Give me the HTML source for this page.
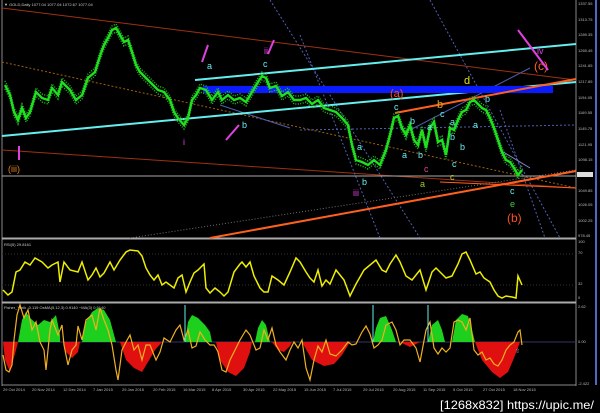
<!DOCTYPE html>
<html><head><meta charset="utf-8"><style>
html,body{margin:0;padding:0;background:#000;width:600px;height:413px;overflow:hidden}
svg{display:block}
text{font-family:"Liberation Sans",sans-serif}
</style></head><body>
<svg width="600" height="413" viewBox="0 0 600 413" xmlns="http://www.w3.org/2000/svg">
<defs>
<polyline id="pr" fill="none" points="5,85 10,95 14,112 18,120 22,108 26,118 30,112 36,92 42,98 48,100 52,88 58,95 62,82 70,90 76,100 82,95 88,78 95,72 100,56 104,45 108,38 112,30 116,28 120,35 124,42 128,40 132,52 136,65 140,72 146,78 152,84 158,90 164,92 170,100 174,112 178,118 184,125 188,118 192,100 196,95 200,88 206,90 212,100 218,92 222,100 228,95 234,100 240,98 246,102 252,92 258,82 262,76 266,78 270,88 276,86 282,96 288,92 294,100 300,100 306,98 312,104 318,100 324,108 330,110 336,112 342,118 348,125 352,145 356,160 362,162 368,165 374,160 380,165 386,150 390,135 394,118 398,116 402,128 406,135 410,125 414,140 418,145 422,130 426,148 430,128 434,122 438,142 442,140 446,155 450,128 454,130 458,120 462,112 466,110 470,102 474,100 478,104 482,108 486,110 490,118 494,128 498,140 502,152 506,160 510,162 514,168 518,175 522,170"/>
</defs>
<rect width="600" height="413" fill="#000"/>
<line x1="2" y1="0" x2="2" y2="386" stroke="#888" stroke-width="1"/>
<line x1="576" y1="0" x2="576" y2="386" stroke="#888" stroke-width="1"/>
<line x1="2" y1="238.5" x2="576" y2="238.5" stroke="#aaa" stroke-width="2"/>
<line x1="2" y1="302.5" x2="576" y2="302.5" stroke="#aaa" stroke-width="2"/>
<line x1="2" y1="385" x2="576" y2="385" stroke="#888"/>
<line x1="596" y1="0" x2="596" y2="385" stroke="#6a8cff" stroke-width="1.5"/>
<text x="4" y="6" font-size="4" fill="#ccc">▼ GOLD,Daily 1077.04 1077.04 1072.67 1077.04</text>
<g fill="none" stroke-width="1">
<line x1="2" y1="8" x2="576" y2="80" stroke="#a03010"/>
<line x1="2" y1="150" x2="576" y2="188" stroke="#a03010"/>
<line x1="2" y1="62" x2="576" y2="188" stroke="#a06010" stroke-dasharray="2,2"/>
<line x1="300" y1="130" x2="576" y2="125" stroke="#5060b0" stroke-dasharray="2,2"/>
<line x1="130" y1="238" x2="576" y2="170" stroke="#707070" stroke-dasharray="1,2"/>
<line x1="270" y1="0" x2="420" y2="238" stroke="#5060b0" stroke-dasharray="2,2"/>
<line x1="430" y1="0" x2="560" y2="238" stroke="#5060b0" stroke-dasharray="2,2"/>
<line x1="300" y1="35" x2="380" y2="238" stroke="#5060b0" stroke-dasharray="2,2"/>
<line x1="500" y1="110" x2="545" y2="238" stroke="#5060b0" stroke-dasharray="2,2"/>
<line x1="220" y1="105" x2="290" y2="128" stroke="#5060b0"/>
<line x1="410" y1="130" x2="530" y2="68" stroke="#5060b0"/>
<line x1="500" y1="150" x2="530" y2="168" stroke="#8888cc"/>
<line x1="2" y1="176" x2="576" y2="176" stroke="#aaa"/>
</g>
<line x1="2" y1="136" x2="576" y2="82" stroke="#6ee" stroke-width="2"/>
<line x1="195" y1="80" x2="576" y2="44" stroke="#6ee" stroke-width="2"/>
<rect x="203" y="86" width="350" height="7" fill="#0a1cff"/>
<line x1="395" y1="113" x2="576" y2="79" stroke="#ff6020" stroke-width="2"/>
<line x1="210" y1="238" x2="576" y2="171" stroke="#ff6020" stroke-width="2"/>
<line x1="440" y1="182" x2="576" y2="188" stroke="#ff6020" stroke-width="1"/>
<use href="#pr" stroke="#1ec01e" stroke-width="1.5" stroke-dasharray="1,1.5" transform="translate(0,-4)"/>
<use href="#pr" stroke="#1ec01e" stroke-width="1.5" stroke-dasharray="1,1.5" transform="translate(0,4)"/>
<use href="#pr" stroke="#1ee01e" stroke-width="2.4"/>
<g font-size="9">
<text x="207" y="69" fill="#6ee">a</text>
<text x="263" y="67" fill="#6ee">c</text>
<text x="242" y="128" fill="#6ee">b</text>
<text x="183" y="145" fill="#e040e0">i</text>
<text x="264" y="54" fill="#e040e0">ii</text>
<text x="353" y="196" fill="#e040e0">iii</text>
<text x="8" y="172" fill="#e08020">(iii)</text>
<text x="390" y="97" fill="#ff5020" font-size="11">(a)</text>
<text x="394" y="110" fill="#6ee">c</text>
<text x="410" y="124" fill="#6ee">b</text>
<text x="427" y="130" fill="#6ee">a</text>
<text x="440" y="117" fill="#6ee">c</text>
<text x="450" y="125" fill="#6ee">a</text>
<text x="437" y="108" fill="#e0a020" font-size="11">b</text>
<text x="464" y="84" fill="#e0e020" font-size="11">d</text>
<text x="485" y="102" fill="#6ee">b</text>
<text x="473" y="128" fill="#6ee">a</text>
<text x="357" y="150" fill="#6ee">a</text>
<text x="362" y="185" fill="#6ee">b</text>
<text x="402" y="158" fill="#6ee">a</text>
<text x="418" y="158" fill="#6ee">b</text>
<text x="450" y="140" fill="#6ee">b</text>
<text x="460" y="150" fill="#6ee">b</text>
<text x="452" y="167" fill="#6ee">c</text>
<text x="424" y="172" fill="#e040a0">c</text>
<text x="420" y="187" fill="#9c3">a</text>
<text x="450" y="180" fill="#cc3">c</text>
<text x="510" y="194" fill="#6ee">c</text>
<text x="510" y="207" fill="#4c4">e</text>
<text x="507" y="222" fill="#ff5020" font-size="12">(b)</text>
<text x="534" y="70" fill="#ff6020" font-size="12">(c)</text>
<text x="537" y="54" fill="#e040e0">iv</text>
</g>
<g stroke="#e040e0" stroke-width="2" fill="none">
<line x1="208" y1="45" x2="202" y2="62"/>
<line x1="274" y1="40" x2="268" y2="54"/>
<line x1="239" y1="125" x2="226" y2="140"/>
<line x1="19" y1="160" x2="19" y2="146"/>
<line x1="518" y1="30" x2="548" y2="70"/>
</g>
<g font-size="4" fill="#bbb">
<text x="578" y="5">1337.55</text><text x="578" y="21">1313.75</text><text x="578" y="36">1289.35</text>
<text x="578" y="52">1265.45</text><text x="578" y="67">1241.65</text><text x="578" y="83">1217.85</text>
<text x="578" y="99">1194.05</text><text x="578" y="114">1169.55</text><text x="578" y="130">1145.75</text>
<text x="578" y="146">1121.95</text><text x="578" y="161">1098.15</text><text x="578" y="192">1049.85</text>
<text x="578" y="206">1026.05</text><text x="578" y="222">1002.25</text><text x="578" y="237">978.45</text>
<text x="578" y="243">100</text><text x="578" y="254">70</text><text x="578" y="285">32</text><text x="578" y="299">0</text>
<text x="578" y="308">2.62</text><text x="578" y="343">0.00</text><text x="578" y="385">-2.422</text>
</g>
<rect x="577" y="172" width="16" height="5" fill="#ddd"/>
<text x="4" y="246" font-size="4" fill="#ccc">RSI(5) 29.8161</text>
<line x1="2" y1="254" x2="576" y2="254" stroke="#333" stroke-dasharray="1,2"/>
<line x1="2" y1="285" x2="576" y2="285" stroke="#333" stroke-dasharray="1,2"/>
<polyline fill="none" stroke="#ee0" stroke-width="1.5" points="3,290 8,295 12,292 16,272 20,270 25,262 30,265 35,258 42,262 48,268 52,265 58,262 60,282 64,262 70,270 78,272 82,262 88,280 92,275 96,268 100,277 104,273 110,262 114,270 120,260 126,252 130,250 138,251 142,256 146,268 150,275 154,280 158,275 162,285 166,282 170,285 174,288 178,278 182,275 186,292 190,282 194,273 198,270 204,264 206,288 210,293 215,288 220,292 224,296 228,292 234,272 240,264 242,262 246,267 250,262 254,276 260,288 264,292 268,292 272,276 278,280 284,285 290,272 296,258 300,262 306,272 310,278 314,282 318,270 322,286 326,280 330,284 336,270 344,280 350,296 356,284 364,270 376,260 382,270 386,272 390,264 396,255 400,262 406,276 412,280 420,270 426,290 432,272 436,268 442,274 446,278 452,276 458,264 462,254 466,252 470,260 476,274 480,272 484,278 490,282 494,290 498,296 502,298 506,296 512,297 516,298 518,276 522,285"/>
<text x="4" y="309" font-size="4" fill="#ccc">Fisher_Yurik -0.119  OsMA(5,12,3) 0.9140  ~MA(3) 0.9140</text>
<line x1="2" y1="342" x2="576" y2="342" stroke="#336" stroke-width="1"/>
<g fill="#1ed01e">
<path d="M18,342 L22,320 L26,312 L30,318 L38,325 L44,320 L50,322 L56,315 L60,335 L60,342Z"/>
<path d="M82,342 L86,322 L92,312 L98,308 L104,310 L110,320 L116,342Z"/>
<path d="M185,342 L188,322 L192,315 L198,318 L205,325 L210,332 L212,342Z"/>
<path d="M255,342 L258,328 L262,320 L266,325 L270,342Z"/>
<path d="M373,342 L376,328 L380,318 L386,316 L392,330 L396,342Z"/>
<path d="M428,342 L432,325 L438,320 L442,330 L445,342Z"/>
<path d="M452,342 L456,320 L462,314 L468,316 L472,330 L475,342Z"/>
</g>
<g fill="#e01010">
<path d="M3,342 L5,360 L10,372 L16,350 L18,342Z"/>
<path d="M64,342 L66,352 L72,358 L78,352 L80,342Z"/>
<path d="M120,342 L126,360 L134,368 L142,372 L148,362 L155,350 L162,342Z"/>
<path d="M216,342 L220,360 L228,372 L236,376 L244,368 L250,352 L252,342Z"/>
<path d="M272,342 L278,350 L284,352 L290,346 L292,342Z"/>
<path d="M302,342 L312,360 L324,366 L334,364 L342,355 L350,342Z"/>
<path d="M400,342 L420,342 L410,347Z"/>
<path d="M475,342 L482,360 L492,372 L500,378 L508,372 L514,358 L520,342Z"/>
</g>
<polyline fill="none" stroke="#f0b020" stroke-width="1.2" points="3,355 6,370 9,372 12,365 14,340 17,315 20,305 24,318 28,310 32,330 36,322 40,342 44,350 46,370 50,330 52,320 58,335 62,325 64,345 68,365 72,350 76,345 78,326 82,340 86,320 92,315 96,330 100,308 104,320 108,330 112,345 116,370 118,380 122,350 126,342 130,335 134,350 138,345 142,360 146,345 150,345 156,360 160,352 164,338 170,342 176,330 180,325 184,340 188,330 192,348 196,346 200,332 205,340 210,345 214,345 216,348 218,352 222,370 226,372 230,360 236,348 240,340 246,330 250,335 256,350 260,348 264,330 268,340 272,328 276,345 280,352 286,360 290,350 294,342 298,348 302,340 306,368 310,380 314,360 318,346 322,352 326,340 330,354 336,356 342,350 348,342 352,345 356,344 362,332 366,326 370,334 374,348 378,345 382,340 386,325 392,322 396,330 400,345 404,340 410,340 416,348 420,362 426,330 430,322 434,348 438,354 442,348 446,352 450,348 454,322 458,320 462,322 466,330 470,318 474,350 478,355 482,352 486,360 490,358 494,364 498,366 502,360 506,350 510,345 514,342 518,332 520,330 522,345"/>
<line x1="185" y1="305" x2="185" y2="342" stroke="#6ee" stroke-width="1"/>
<line x1="373" y1="305" x2="373" y2="342" stroke="#6ee" stroke-width="1"/>
<line x1="428" y1="305" x2="428" y2="342" stroke="#6ee" stroke-width="1"/>
<text x="515" y="353" font-size="6" fill="#aaa">⇧</text>
<g font-size="4" fill="#bbb">
<text x="3" y="391">29 Oct 2014</text><text x="32" y="391">20 Nov 2014</text><text x="63" y="391">12 Dec 2014</text>
<text x="93" y="391">7 Jan 2015</text><text x="122" y="391">29 Jan 2015</text><text x="153" y="391">20 Feb 2015</text>
<text x="183" y="391">16 Mar 2015</text><text x="212" y="391">8 Apr 2015</text><text x="243" y="391">30 Apr 2015</text>
<text x="273" y="391">22 May 2015</text><text x="304" y="391">15 Jun 2015</text><text x="333" y="391">7 Jul 2015</text>
<text x="363" y="391">29 Jul 2015</text><text x="393" y="391">20 Aug 2015</text><text x="423" y="391">11 Sep 2015</text>
<text x="453" y="391">5 Oct 2015</text><text x="483" y="391">27 Oct 2015</text><text x="513" y="391">18 Nov 2015</text>
</g>
<text x="440" y="409" font-size="12" fill="#fff" font-family="Liberation Mono,monospace" textLength="154" lengthAdjust="spacingAndGlyphs">[1268x832] https://upic.me/</text>
</svg>
</body></html>
